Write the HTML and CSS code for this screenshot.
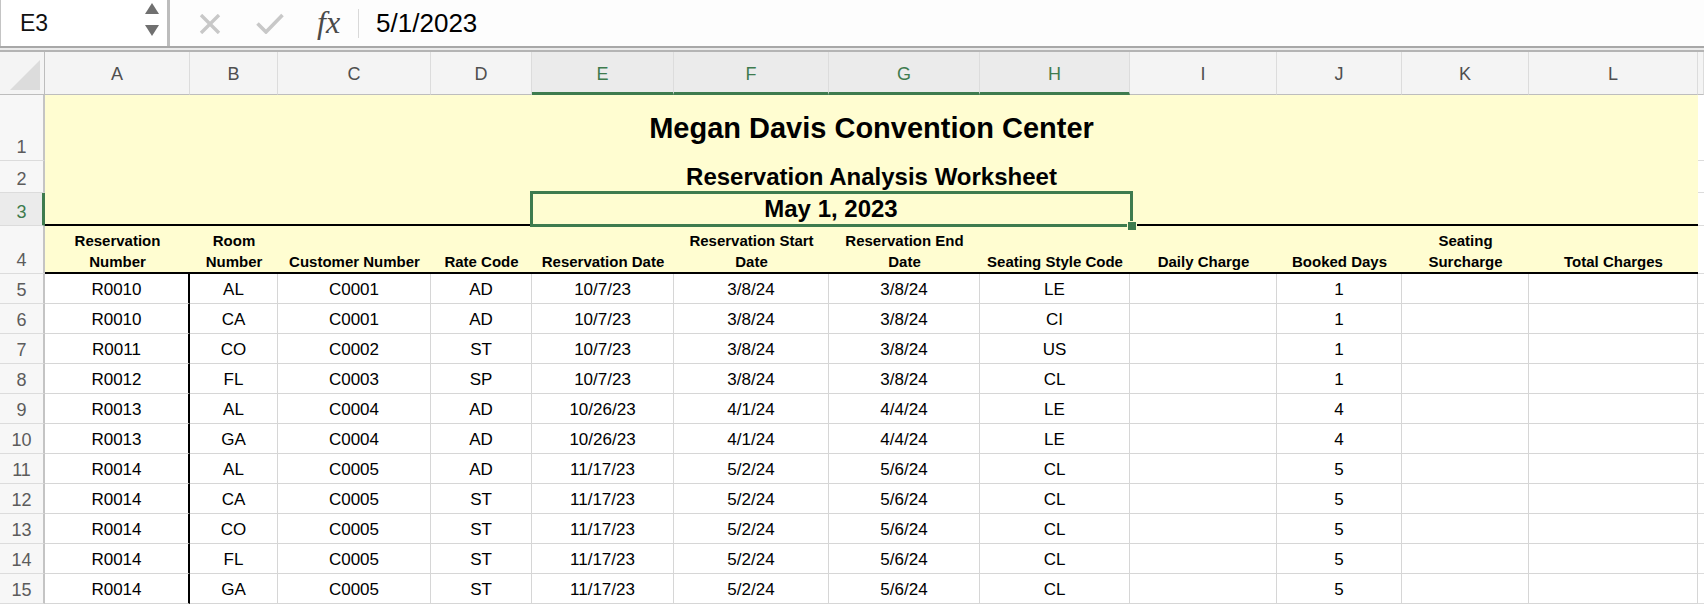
FILE: index.html
```html
<!DOCTYPE html>
<html>
<head>
<meta charset="utf-8">
<link rel="stylesheet" href="styles.css">
</head>
<body>
<div class="fbar">
  <div class="namebox">
    <span class="ref">E3</span>
    <svg class="spin" width="14" height="46" viewBox="0 0 14 46"><polygon points="0,14 7,3 14,14" fill="#707070"/><polygon points="0,25 14,25 7,36" fill="#707070"/></svg>
  </div>
  <div class="ficons">
    <svg class="ic-x" width="22" height="20" viewBox="0 0 22 20"><path d="M2 1 L20 19 M20 1 L2 19" stroke="#c8c8c8" stroke-width="3.4" fill="none"/></svg>
    <svg class="ic-ok" width="28" height="21" viewBox="0 0 28 21"><path d="M1.5 10.5 L10 19 L26.5 2" stroke="#c8c8c8" stroke-width="3.6" fill="none"/></svg>
    <span class="fx">fx</span>
    <span class="vsep"></span>
  </div>
  <div class="ftext">5/1/2023</div>
</div>
<div class="fbottom"></div>

<div class="sheet">
  <div class="corner"></div>
  <div class="ch">A</div><div class="ch">B</div><div class="ch">C</div><div class="ch">D</div>
  <div class="ch sel">E</div><div class="ch sel">F</div><div class="ch sel">G</div><div class="ch sel">H</div>
  <div class="ch">I</div><div class="ch">J</div><div class="ch">K</div><div class="ch">L</div><div class="ch"></div>

  <div class="rh">1</div>
  <div class="y t1">Megan Davis Convention Center</div>
  <div class="m"></div>

  <div class="rh">2</div>
  <div class="y t2">Reservation Analysis Worksheet</div>
  <div class="m"></div>

  <div class="rh sel">3</div>
  <div class="y r3 sp-ad"></div>
  <div class="y r3 sp-eh t3">May 1, 2023<div class="selbox"><div class="handle"></div></div></div>
  <div class="y r3 sp-il"></div>
  <div class="m"></div>

  <div class="rh">4</div>
  <div class="y h">Reservation<br>Number</div>
  <div class="y h">Room<br>Number</div>
  <div class="y h">Customer Number</div>
  <div class="y h">Rate Code</div>
  <div class="y h">Reservation Date</div>
  <div class="y h">Reservation Start<br>Date</div>
  <div class="y h">Reservation End<br>Date</div>
  <div class="y h">Seating Style Code</div>
  <div class="y h">Daily Charge</div>
  <div class="y h">Booked Days</div>
  <div class="y h">Seating<br>Surcharge</div>
  <div class="y h">Total Charges</div>
  <div class="m"></div>

  <div class="rh">5</div><div class="d a">R0010</div><div class="d">AL</div><div class="d">C0001</div><div class="d">AD</div><div class="d">10/7/23</div><div class="d">3/8/24</div><div class="d">3/8/24</div><div class="d">LE</div><div class="d"></div><div class="d">1</div><div class="d"></div><div class="d"></div><div class="m"></div>
  <div class="rh">6</div><div class="d a">R0010</div><div class="d">CA</div><div class="d">C0001</div><div class="d">AD</div><div class="d">10/7/23</div><div class="d">3/8/24</div><div class="d">3/8/24</div><div class="d">CI</div><div class="d"></div><div class="d">1</div><div class="d"></div><div class="d"></div><div class="m"></div>
  <div class="rh">7</div><div class="d a">R0011</div><div class="d">CO</div><div class="d">C0002</div><div class="d">ST</div><div class="d">10/7/23</div><div class="d">3/8/24</div><div class="d">3/8/24</div><div class="d">US</div><div class="d"></div><div class="d">1</div><div class="d"></div><div class="d"></div><div class="m"></div>
  <div class="rh">8</div><div class="d a">R0012</div><div class="d">FL</div><div class="d">C0003</div><div class="d">SP</div><div class="d">10/7/23</div><div class="d">3/8/24</div><div class="d">3/8/24</div><div class="d">CL</div><div class="d"></div><div class="d">1</div><div class="d"></div><div class="d"></div><div class="m"></div>
  <div class="rh">9</div><div class="d a">R0013</div><div class="d">AL</div><div class="d">C0004</div><div class="d">AD</div><div class="d">10/26/23</div><div class="d">4/1/24</div><div class="d">4/4/24</div><div class="d">LE</div><div class="d"></div><div class="d">4</div><div class="d"></div><div class="d"></div><div class="m"></div>
  <div class="rh">10</div><div class="d a">R0013</div><div class="d">GA</div><div class="d">C0004</div><div class="d">AD</div><div class="d">10/26/23</div><div class="d">4/1/24</div><div class="d">4/4/24</div><div class="d">LE</div><div class="d"></div><div class="d">4</div><div class="d"></div><div class="d"></div><div class="m"></div>
  <div class="rh">11</div><div class="d a">R0014</div><div class="d">AL</div><div class="d">C0005</div><div class="d">AD</div><div class="d">11/17/23</div><div class="d">5/2/24</div><div class="d">5/6/24</div><div class="d">CL</div><div class="d"></div><div class="d">5</div><div class="d"></div><div class="d"></div><div class="m"></div>
  <div class="rh">12</div><div class="d a">R0014</div><div class="d">CA</div><div class="d">C0005</div><div class="d">ST</div><div class="d">11/17/23</div><div class="d">5/2/24</div><div class="d">5/6/24</div><div class="d">CL</div><div class="d"></div><div class="d">5</div><div class="d"></div><div class="d"></div><div class="m"></div>
  <div class="rh">13</div><div class="d a">R0014</div><div class="d">CO</div><div class="d">C0005</div><div class="d">ST</div><div class="d">11/17/23</div><div class="d">5/2/24</div><div class="d">5/6/24</div><div class="d">CL</div><div class="d"></div><div class="d">5</div><div class="d"></div><div class="d"></div><div class="m"></div>
  <div class="rh">14</div><div class="d a">R0014</div><div class="d">FL</div><div class="d">C0005</div><div class="d">ST</div><div class="d">11/17/23</div><div class="d">5/2/24</div><div class="d">5/6/24</div><div class="d">CL</div><div class="d"></div><div class="d">5</div><div class="d"></div><div class="d"></div><div class="m"></div>
  <div class="rh">15</div><div class="d a">R0014</div><div class="d">GA</div><div class="d">C0005</div><div class="d">ST</div><div class="d">11/17/23</div><div class="d">5/2/24</div><div class="d">5/6/24</div><div class="d">CL</div><div class="d"></div><div class="d">5</div><div class="d"></div><div class="d"></div><div class="m"></div>
</div>
</body>
</html>
```
FILE: styles.css
```css
* { box-sizing: border-box; margin: 0; padding: 0; }
html, body { width: 1704px; height: 606px; overflow: hidden; background: #ffffff; }
body { font-family: "Liberation Sans", Arial, sans-serif; color: #000; }

/* formula bar */
.fbar { display: flex; height: 46px; background: #fdfdfd; }
.namebox {
  width: 170px; display: flex; align-items: center; justify-content: space-between;
  padding-left: 19px; padding-right: 8px; font-size: 23px; color: #111;
  border-left: 1px solid #c4c4c4; border-right: 3px solid #bdbdbd; background: #fff;
}
.spin { display: block; }
.ficons { display: flex; align-items: center; padding-left: 29px; }
.ic-x { margin-top: 1px; }
.ic-ok { margin-left: 35px; }
.fx {
  margin-left: 33px; font-family: "Liberation Serif", "Times New Roman", serif;
  font-style: italic; font-size: 32px; color: #4a4a4a; line-height: 1; margin-top: -3px;
}
.vsep { width: 1px; height: 29px; background: #d9d9d9; margin-left: 18px; }
.ftext { display: flex; align-items: center; padding-left: 17px; font-size: 26px; color: #000; }
.fbottom { height: 6px; background: #ebebeb; border-top: 2px solid #a8a8a8; border-bottom: 2px solid #b4b4b4; }

/* grid */
.sheet {
  display: grid;
  grid-template-columns: 45px 145px 88px 153px 101px 142px 155px 151px 150px 147px 125px 127px 169px 1fr;
  grid-template-rows: 43px 66px 32px 33px 48px repeat(11, 30px);
}
.corner {
  position: relative; background: #f4f4f4;
  border-right: 1px solid #bdbdbd; border-bottom: 1px solid #bdbdbd;
}
.corner::after {
  content: ""; position: absolute; left: 10px; top: 8px; width: 30px; height: 30px;
  background: #dcdcdc; clip-path: polygon(100% 0, 100% 100%, 0 100%);
}
.ch {
  display: flex; align-items: center; justify-content: center;
  background: #f4f4f4; border-right: 1px solid #dcdcdc; border-bottom: 1px solid #bdbdbd;
  font-size: 18px; color: #4f4f4f; padding-top: 2px;
}
.ch.sel { color: #3e7b4e; background: #ebebeb; border-bottom: 3px solid #3e7b4e; padding-top: 4px; }

.rh {
  display: flex; align-items: flex-end; justify-content: center;
  background: #f7f7f7; border-right: 2px solid #c4c4c4; border-bottom: 1px solid #dcdcdc;
  font-size: 18px; line-height: 21px; color: #5c5c5c; padding-bottom: 2px;
}
.rh.sel { color: #3e7b4e; background: #ebebeb; border-right: 3px solid #3e7b4e; padding-left: 1px; }

.m { background: #fff; border-bottom: 1px solid #dcdcdc; }

.y { background: #fffdd1; }
.t1, .t2 {
  grid-column: 2 / 14; display: flex; align-items: center; justify-content: center;
  font-weight: bold;
}
.t1 { font-size: 29px; padding-top: 1px; }
.t2 { font-size: 24px; padding-top: 0; }
.r3 { border-bottom: 2px solid #000; }
.sp-ad { grid-column: 2 / 6; }
.sp-eh { grid-column: 6 / 10; }
.sp-il { grid-column: 10 / 14; }
.t3 {
  position: relative; display: flex; align-items: center; justify-content: center;
  font-weight: bold; font-size: 24px;
}
.selbox {
  position: absolute; left: -2px; top: -2px; right: -3px; bottom: -3px;
  border: 3px solid #3e7b4e;
}
.handle {
  position: absolute; right: -7px; bottom: -7px; width: 10px; height: 10px;
  background: #3e7b4e; border: 1px solid #fffdd1;
}

.h {
  display: flex; align-items: flex-end; justify-content: center; text-align: center;
  border-bottom: 2px solid #000; font-weight: bold; font-size: 15px; line-height: 21px;
  padding-bottom: 0;
}

.d {
  display: flex; align-items: center; justify-content: center;
  border-right: 1px solid #d6d6d6; border-bottom: 1px solid #d6d6d6;
  font-size: 17px; padding-top: 2px;
}
.d.a { border-right: 2px solid #000; }
```
